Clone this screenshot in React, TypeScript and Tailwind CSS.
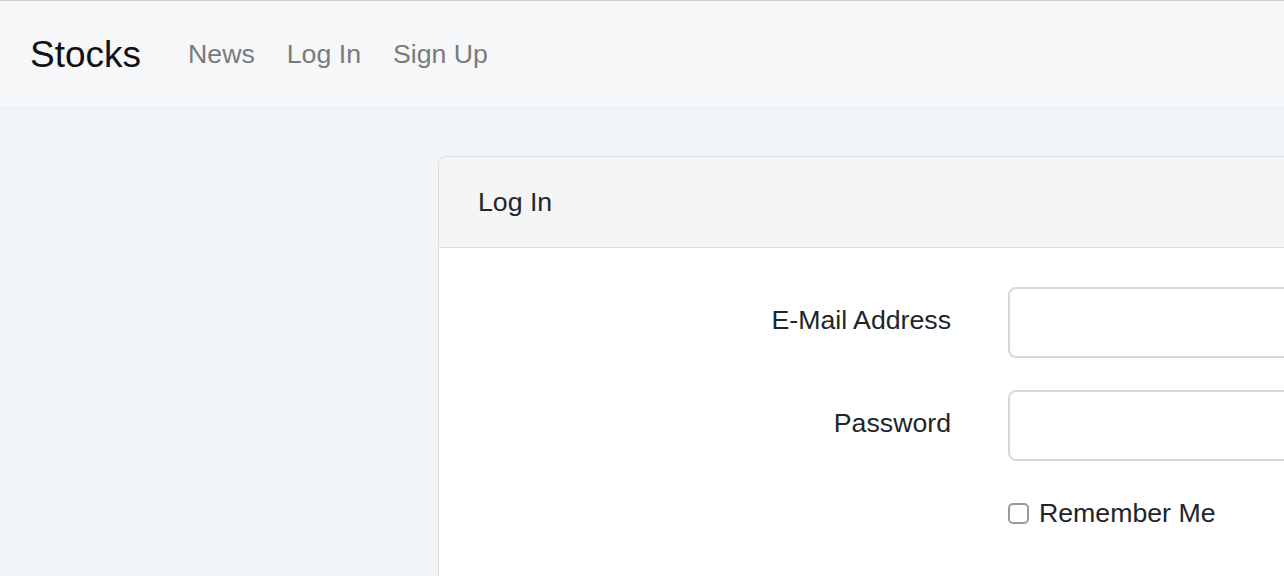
export default function App() {
  return (
    <div
      className="h-[576px] w-[1284px] overflow-hidden bg-[#f1f5f8] text-[#212529]"
      style={{ fontFamily: '"Liberation Sans", Arial, sans-serif' }}
    >
      <nav className="flex h-[107px] items-center border-t border-[#cfd1d4] bg-[#f6f7f9] px-[30px] shadow-[0_2px_4px_rgba(0,0,0,0.03)]">
        <a className="mr-[47px] text-[37px] leading-none text-[#111]">Stocks</a>
        <div className="flex gap-[32px] text-[26.7px] leading-none text-[#7a7b7c]">
          <a>News</a>
          <a>Log In</a>
          <a>Sign Up</a>
        </div>
      </nav>

      <main className="pl-[438px] pt-[49px]">
        <div className="w-[1200px] shrink-0 rounded-[8px] border border-[#dcdcdc] bg-white pb-[200px]">
          <div className="flex h-[91px] items-center rounded-t-[8px] border-b border-[#dcdcdc] bg-[#f5f5f5] px-[39px] text-[26.7px]">
            Log In
          </div>
          <form className="flex flex-col gap-[32px] pt-[39px]">
            <div className="flex items-center">
              <label className="-mt-[4px] w-[512px] shrink-0 text-right text-[26.7px]">E-Mail Address</label>
              <input
                type="email"
                className="ml-[57px] h-[71px] w-[500px] shrink-0 rounded-[8px] border-2 border-[#d5d9de] bg-white"
              />
            </div>
            <div className="flex items-center">
              <label className="-mt-[4px] w-[512px] shrink-0 text-right text-[26.7px]">Password</label>
              <input
                type="password"
                className="ml-[57px] h-[71px] w-[500px] shrink-0 rounded-[8px] border-2 border-[#d5d9de] bg-white"
              />
            </div>
            <div className="flex items-center gap-[10px] pl-[569px]">
              <span className="h-[21px] w-[21px] shrink-0 rounded-[5px] border-2 border-[#9a9a9a] bg-white" />
              <span className="text-[26.7px]">Remember Me</span>
            </div>
          </form>
        </div>
      </main>
    </div>
  );
}
